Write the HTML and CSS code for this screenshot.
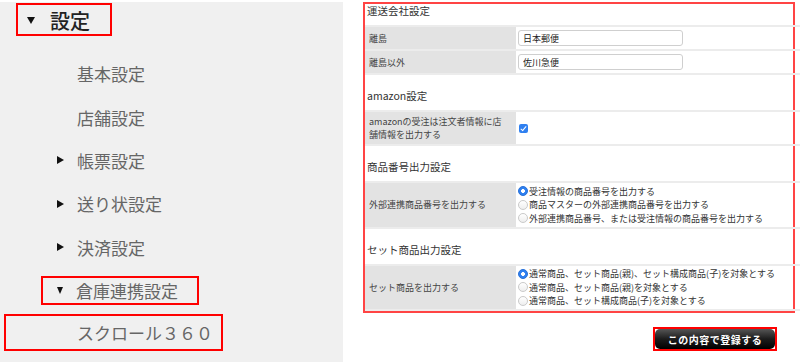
FILE: index.html
```html
<!DOCTYPE html>
<html lang="ja">
<head>
    <meta charset="UTF-8">
    <meta name="viewport" content="width=device-width, initial-scale=1.0">
    <title>設定</title>
    <link rel="stylesheet" href="styles.css">
</head>
<body>
    <div class="page">
        <nav class="sidebar">
            <ul class="menu">
                <li class="menu__top">
                    <span class="menu__head"><i class="arrow arrow--big"></i>設定</span>
                </li>
                <li class="menu__item menu__item--leaf"><span class="menu__label">基本設定</span></li>
                <li class="menu__item menu__item--leaf"><span class="menu__label">店舗設定</span></li>
                <li class="menu__item"><span class="menu__label"><i class="arrow arrow--right"></i>帳票設定</span></li>
                <li class="menu__item"><span class="menu__label"><i class="arrow arrow--right"></i>送り状設定</span></li>
                <li class="menu__item"><span class="menu__label"><i class="arrow arrow--right"></i>決済設定</span></li>
                <li class="menu__item"><span class="menu__label menu__label--open"><i class="arrow arrow--down"></i>倉庫連携設定</span></li>
                <li class="menu__item menu__item--leaf"><span class="menu__label menu__label--current">スクロール３６０</span></li>
            </ul>
        </nav>

        <main class="content">
            <div class="settings">
                <h2 class="settings__title settings__title--first">運送会社設定</h2>
                <table class="settings__table">
                    <tr>
                        <td class="settings__label">離島</td>
                        <td class="settings__value"><input class="settings__input" type="text" value="日本郵便"></td>
                    </tr>
                    <tr>
                        <td class="settings__label">離島以外</td>
                        <td class="settings__value"><input class="settings__input" type="text" value="佐川急便"></td>
                    </tr>
                </table>

                <h2 class="settings__title">amazon設定</h2>
                <table class="settings__table">
                    <tr>
                        <td class="settings__label">amazonの受注は注文者情報に店舗情報を出力する</td>
                        <td class="settings__value"><input class="settings__check" type="checkbox" checked></td>
                    </tr>
                </table>

                <h2 class="settings__title">商品番号出力設定</h2>
                <table class="settings__table">
                    <tr>
                        <td class="settings__label">外部連携商品番号を出力する</td>
                        <td class="settings__value settings__value--list">
                            <label class="choice"><input type="radio" name="code" checked>受注情報の商品番号を出力する</label>
                            <label class="choice"><input type="radio" name="code">商品マスターの外部連携商品番号を出力する</label>
                            <label class="choice"><input type="radio" name="code">外部連携商品番号、または受注情報の商品番号を出力する</label>
                        </td>
                    </tr>
                </table>

                <h2 class="settings__title">セット商品出力設定</h2>
                <table class="settings__table">
                    <tr>
                        <td class="settings__label">セット商品を出力する</td>
                        <td class="settings__value settings__value--list">
                            <label class="choice"><input type="radio" name="set" checked>通常商品、セット商品(親)、セット構成商品(子)を対象とする</label>
                            <label class="choice"><input type="radio" name="set">通常商品、セット商品(親)を対象とする</label>
                            <label class="choice"><input type="radio" name="set">通常商品、セット構成商品(子)を対象とする</label>
                        </td>
                    </tr>
                </table>
            </div>

            <div class="content__submit">
                <span class="submit-frame"><button class="submit">この内容で登録する</button></span>
            </div>
        </main>
    </div>
</body>
</html>
```

FILE: styles.css
```css
* {
    box-sizing: border-box;
}

body {
    margin: 0;
    width: 800px;
    height: 363px;
    overflow: hidden;
    background-color: #fff;
    font-family: "Noto Sans CJK JP", "Noto Sans", sans-serif;
}

.page {
    display: flex;
    gap: 20px;
    height: 363px;
}

/* sidebar */

.sidebar {
    width: 343px;
    height: 360px;
    margin-top: 2px;
    background-color: #f0f0f0;
}

.menu {
    list-style: none;
    margin: 0;
    padding: 0;
}

.menu__top {
    height: 34px;
    padding-top: 1px;
    margin-bottom: 16px;
}

.menu__head {
    display: inline-flex;
    align-items: center;
    height: 33px;
    margin-left: 16px;
    padding: 2px 20px 0 9px;
    border: 2px solid #f00;
    font-size: 20px;
    font-weight: 500;
    color: #222;
}

.menu__item {
    display: flex;
    align-items: center;
    height: 43.4px;
    padding-left: 57px;
}

.menu__item--leaf {
    padding-left: 77px;
}

.menu__label {
    display: inline-flex;
    align-items: center;
    font-size: 17px;
    color: #666;
}

.menu__label--open {
    height: 29px;
    margin-left: -16px;
    padding: 0 19px 0 14px;
    border: 2px solid #f00;
}

.menu__label--current {
    height: 37px;
    margin-left: -73px;
    margin-top: -4px;
    padding: 0 8px 0 71px;
    border: 2px solid #f00;
}

.arrow {
    display: inline-block;
    width: 0;
    height: 0;
    margin-right: 13px;
}

.arrow--right {
    border-left: 7px solid #111;
    border-top: 4.5px solid transparent;
    border-bottom: 4.5px solid transparent;
}

.arrow--down {
    border-top: 7px solid #111;
    border-left: 3.5px solid transparent;
    border-right: 3.5px solid transparent;
}

.arrow--big {
    margin-right: 15px;
    border-top: 7px solid #111;
    border-left: 4px solid transparent;
    border-right: 4px solid transparent;
}

/* settings */

.content {
    flex: 1;
    padding-top: 2px;
}

.settings {
    width: 432px;
    border: 2px solid #f44;
}

.settings__title {
    margin: 14px 0 0;
    padding: 0 0 7px 2px;
    font-size: 10.5px;
    line-height: 14px;
    font-weight: normal;
    color: #333;
}

.settings__title--first {
    margin-top: 0;
}

.settings__table {
    width: 435px;
    border-collapse: collapse;
}

.settings__table td {
    border-top: 2px solid #ececec;
    border-bottom: 2px solid #ececec;
    vertical-align: middle;
}

.settings__label {
    width: 151px;
    padding: 3px 10px 3px 4px;
    background-color: #e3e3e3;
    font-size: 9px;
    line-height: 13px;
    color: #444;
}

.settings__value {
    padding: 3px 0 3px 2px;
}

.settings__value--list {
    padding: 1.5px 0 1.5px 2px;
}

.settings__input {
    display: block;
    width: 165px;
    height: 16px;
    padding: 0 4px;
    border: 1px solid #cfcfcf;
    border-radius: 3px;
    font-family: inherit;
    font-size: 9px;
    color: #222;
    outline: none;
}

.settings__check {
    -webkit-appearance: none;
    appearance: none;
    position: relative;
    display: block;
    width: 9px;
    height: 9px;
    margin: 0 0 0 1px;
    border-radius: 2px;
    background-color: #2f80f0;
}

.settings__check::after {
    content: "";
    position: absolute;
    left: 3px;
    top: 1px;
    width: 2px;
    height: 5px;
    border-right: 1.2px solid #fff;
    border-bottom: 1.2px solid #fff;
    transform: rotate(40deg);
}

.choice {
    display: flex;
    align-items: center;
    font-size: 9px;
    line-height: 13.5px;
    color: #333;
}

.choice input {
    -webkit-appearance: none;
    appearance: none;
    width: 10px;
    height: 10px;
    margin: 0 1px 0 0;
    border: 1px solid #cacaca;
    border-radius: 50%;
    background: linear-gradient(#fff, #eee);
}

.choice input:checked {
    border-color: #2a72d8;
    background: radial-gradient(circle, #fff 0 1.6px, #2f80f0 2.2px);
}

/* submit */

.content__submit {
    display: flex;
    justify-content: flex-end;
    margin-top: 14px;
    padding-right: 23px;
}

.submit-frame {
    display: flex;
    width: 124px;
    height: 24px;
    border: 2px solid #f00;
}

.submit {
    width: 100%;
    height: 100%;
    border: none;
    border-radius: 5px;
    background: linear-gradient(to bottom, #555 0%, #1c1c1c 50%, #000 100%);
    color: #fff;
    font-family: inherit;
    font-size: 10px;
    font-weight: bold;
    letter-spacing: 0.5px;
    cursor: pointer;
}
```
